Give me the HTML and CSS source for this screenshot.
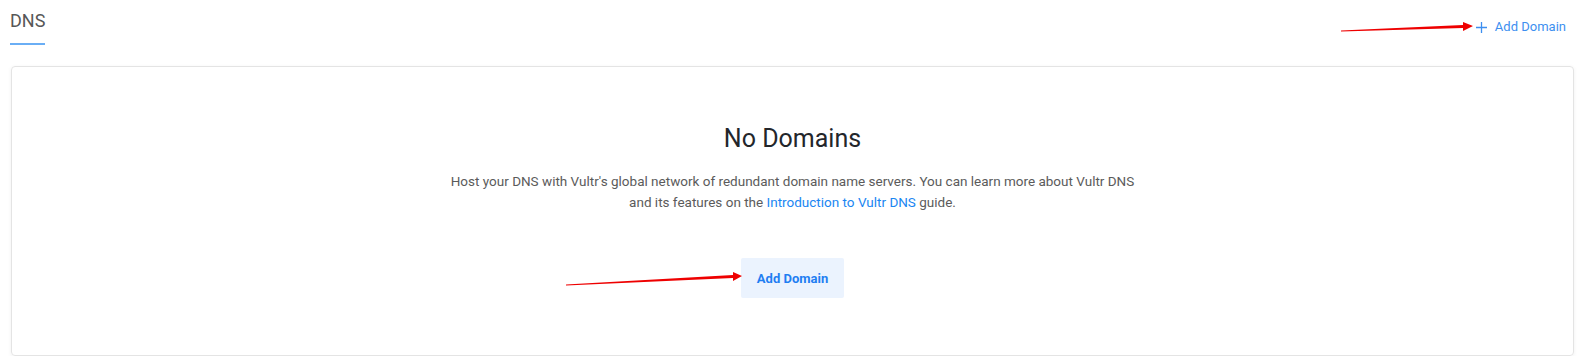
FILE: index.html
```html
<!DOCTYPE html>
<html lang="en">
<head>
    <meta charset="UTF-8">
    <meta name="viewport" content="width=device-width, initial-scale=1.0">
    <title>DNS</title>
    <link rel="stylesheet" href="styles.css">
</head>
<body>
    <div class="page">
        <div class="header">
            <div class="tab">DNS</div>
            <a class="add-link" href="#">
                <svg class="plus" width="11" height="11" viewBox="0 0 11 11">
                    <path d="M5.5 0v11M0 5.5h11" stroke="currentColor" stroke-width="1.3" fill="none"/>
                </svg>
                Add Domain
            </a>
        </div>

        <div class="card">
            <h2>No Domains</h2>
            <p>Host your DNS with Vultr's global network of redundant domain name servers. You can learn more about Vultr DNS and its features on the <a href="#">Introduction to Vultr DNS</a> guide.</p>
            <button type="button">Add Domain</button>
        </div>
    </div>

    <!-- annotation arrows -->
    <svg class="arrows" width="1584" height="363" viewBox="0 0 1584 363">
        <polygon points="1341,30.6 1463,24.9 1463,21.9 1473,26 1463,30.9 1463,27.9 1341,31.4" fill="#ee0000"/>
        <polygon points="566,284.6 733,275 733,272 742,276 733,281 733,278 566,285.4" fill="#ee0000"/>
    </svg>
</body>
</html>
```

FILE: styles.css
```css
body {
    margin: 0;
    font-family: Roboto, "Liberation Sans", Arial, sans-serif;
    background-color: #fff;
    color: #333;
}
.page {
    padding: 0 10px;
}
.header {
    display: flex;
    justify-content: space-between;
    align-items: flex-start;
}
.tab {
    padding-top: 9px;
    padding-bottom: 10px;
    font-size: 18px;
    line-height: 24px;
    color: #575757;
    border-bottom: 2px solid #6aaef5;
}
.add-link {
    display: flex;
    align-items: center;
    gap: 8px;
    margin-top: 18px;
    margin-right: 8px;
    font-size: 13px;
    line-height: 18px;
    color: #3d8ff0;
    text-decoration: none;
}
.plus {
    margin-top: 1px;
}
.card {
    margin-top: 21px;
    margin-left: 1px;
    padding: 56px 20px 57px;
    border: 1px solid #e4e4e4;
    border-radius: 4px;
    box-shadow: 0 1px 4px rgba(0, 0, 0, 0.06);
    display: flex;
    flex-direction: column;
    align-items: center;
    text-align: center;
}
h2 {
    margin: 0;
    font-size: 25px;
    line-height: 32px;
    font-weight: 400;
    color: #23262b;
}
p {
    max-width: 700px;
    margin: 16px 0 0;
    font-size: 13.5px;
    line-height: 21px;
    color: #5b5b5b;
}
p a {
    color: #1a86f2;
    text-decoration: none;
}
button {
    margin-top: 45px;
    height: 40px;
    padding: 0 16px;
    background-color: #ebf3fe;
    color: #1f7ef2;
    border: none;
    border-radius: 2px;
    font-family: inherit;
    font-size: 13px;
    font-weight: 700;
    cursor: pointer;
}
.arrows {
    position: absolute;
    top: 0;
    left: 0;
    pointer-events: none;
}
```
